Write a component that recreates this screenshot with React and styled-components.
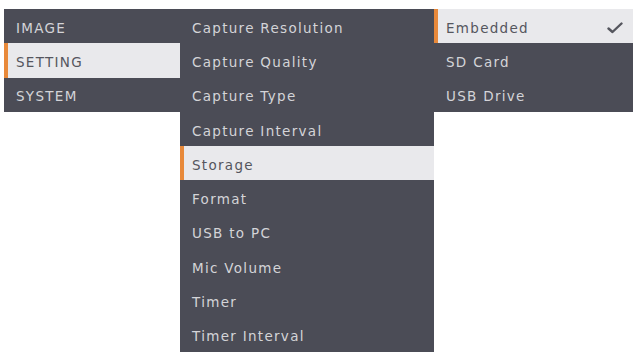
import React from "react";
import styled, { createGlobalStyle } from "styled-components";

const GlobalStyle = createGlobalStyle`
    body {
        margin: 0;
        background: #ffffff;
        font-family: "DejaVu Sans", "Liberation Sans", sans-serif;
    }
`;

const categories = ["IMAGE", "SETTING", "SYSTEM"];
const settings = [
    "Capture Resolution",
    "Capture Quality",
    "Capture Type",
    "Capture Interval",
    "Storage",
    "Format",
    "USB to PC",
    "Mic Volume",
    "Timer",
    "Timer Interval",
];
const storages = ["Embedded", "SD Card", "USB Drive"];

const Check = () => (
    <svg width="16" height="12" viewBox="0 0 16 12">
        <path d="M1.5 6.5 L5.5 10 L14.5 1.5" fill="none" stroke="#55565e" strokeWidth="2.4" strokeLinecap="round" strokeLinejoin="round" />
    </svg>
);

const App = () => {
    return (
        <>
            <GlobalStyle />
            <Screen>
                <Column width={176}>
                    {categories.map((c) => (
                        <Item key={c} active={c === "SETTING"}>{c}</Item>
                    ))}
                </Column>
                <Column width={254}>
                    {settings.map((s) => (
                        <Item key={s} active={s === "Storage"}>{s}</Item>
                    ))}
                </Column>
                <Column width={199}>
                    {storages.map((s) => (
                        <Item key={s} active={s === "Embedded"}>
                            {s}
                            {s === "Embedded" && <Check />}
                        </Item>
                    ))}
                </Column>
            </Screen>
        </>
    );
};

export default App;

const Screen = styled.div`
    display: flex;
    align-items: flex-start;
    padding: 9px 0 0 4px;
`;

const Column = styled.div`
    display: flex;
    flex-direction: column;
    width: ${props => props.width}px;
    background: #4b4c56;
`;

const Item = styled.div`
    display: flex;
    align-items: center;
    justify-content: space-between;
    box-sizing: border-box;
    height: 34.3px;
    padding: 3px 10px 0 12px;
    font-size: 13.5px;
    letter-spacing: 1.3px;
    color: ${props => props.active ? "#55565e" : "#d4d4d8"};
    background: ${props => props.active ? "#e9e9ec" : "transparent"};
    border-left: ${props => props.active ? "4px solid #e8893a" : "none"};
    padding-left: ${props => props.active ? "8px" : "12px"};
`;
